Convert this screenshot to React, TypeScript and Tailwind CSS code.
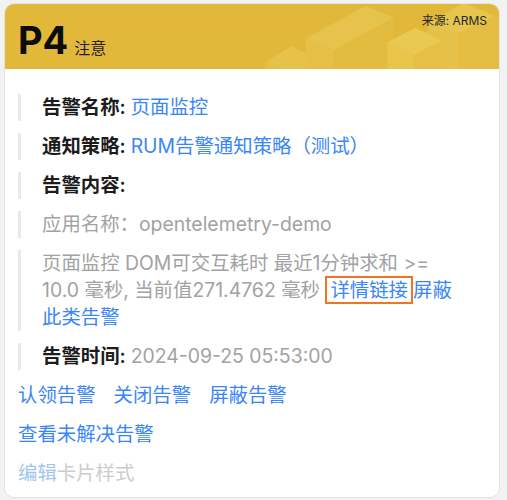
const font = { fontFamily: '"Inter", "Noto Sans CJK SC", sans-serif' };

function HeaderShapes() {
  return (
    <svg
      className="absolute inset-0 h-full w-full"
      viewBox="0 0 496 66"
      preserveAspectRatio="none"
      aria-hidden="true"
    >
      {/* small box */}
      <polygon points="262,59 287,43 317,57 292,73" fill="#e7c24b" />
      <polygon points="262,59 292,73 262,73" fill="#e5bf45" />
      {/* long bar */}
      <polygon points="302,35 362,2 390,14 330,47" fill="#e6c34d" />
      <polygon points="302,35 330,47 330,70 302,70" fill="#e5bf46" />
      <polygon points="330,47 390,14 390,70 330,70" fill="#e3bb3f" />
      {/* cube */}
      <polygon points="384,39 412,24 439,37 410,52" fill="#eac953" />
      <polygon points="384,39 410,52 410,70 384,70" fill="#e9c54a" />
      <polygon points="410,52 439,37 439,70 410,70" fill="#e6c046" />
      {/* tall box right */}
      <polygon points="424,20 460,-1 492,12 455,30" fill="#e7c650" />
      <polygon points="424,20 455,30 455,70 439,70 439,37 424,30" fill="#e5c14a" />
      <polygon points="455,30 492,12 496,14 496,70 455,70" fill="#e4bd42" />
    </svg>
  );
}

function Row({ children, className = "" }: { children: React.ReactNode; className?: string }) {
  return (
    <div className={`mb-[12px] mr-[24px] border-l-[3px] border-[#e9e9e9] pl-[21px] text-[19.4px] leading-[27px] ${className}`}>
      {children}
    </div>
  );
}

export default function App() {
  return (
    <div className="min-h-screen bg-[#f2f2f2] pl-[4px] pr-[7px] pt-[3px]" style={font}>
      <div className="h-[495px] w-[496px] overflow-hidden rounded-[10px] border border-[#e2e2e2] bg-white">
        <div className="relative flex h-[65px] justify-between bg-[#e2b83a] pl-[13px] pr-[12px]">
          <HeaderShapes />
          <div className="relative flex items-baseline gap-[6px] self-end pb-[9px]">
            <span className="text-[38px] font-bold leading-none text-[#0c0c0c]">P4</span>
            <span className="text-[16px] text-[#222]">注意</span>
          </div>
          <div className="relative pt-[8px] text-[12px] text-[#262626]">来源: ARMS</div>
        </div>

        <div className="px-[13px] pt-[25px]">
          <Row>
            <span className="font-semibold text-[#1c1c1c]">告警名称: </span>
            <span className="text-[#3a86f6]">页面监控</span>
          </Row>
          <Row>
            <span className="font-semibold text-[#1c1c1c]">通知策略: </span>
            <span className="text-[#3a86f6]">RUM告警通知策略（测试）</span>
          </Row>
          <Row>
            <span className="font-semibold text-[#1c1c1c]">告警内容:</span>
          </Row>
          <Row className="text-[#a2a2a2]">应用名称：opentelemetry-demo</Row>
          <Row className="text-[#a2a2a2]">
            页面监控 DOM可交互耗时 最近1分钟求和 &gt;= 10.0 毫秒, 当前值271.4762 毫秒{" "}
            <span className="border-2 border-[#ef7424] px-[3px] text-[#3a86f6]">详情链接</span>
            <span className="text-[#3a86f6]">屏蔽此类告警</span>
          </Row>
          <Row>
            <span className="font-semibold text-[#1c1c1c]">告警时间: </span>
            <span className="text-[#a2a2a2]">2024-09-25 05:53:00</span>
          </Row>

          <div className="mt-[11px] flex flex-col gap-[12px] text-[19.4px] leading-[27px]">
            <div className="flex gap-[18px] text-[#3a86f6]">
              <span>认领告警</span>
              <span>关闭告警</span>
              <span>屏蔽告警</span>
            </div>
            <div className="text-[#3a86f6]">查看未解决告警</div>
            <div>
              <span className="text-[#9fc6ec]">编辑</span>
              <span className="text-[#cccccc]">卡片样式</span>
            </div>
          </div>
        </div>
      </div>
    </div>
  );
}
